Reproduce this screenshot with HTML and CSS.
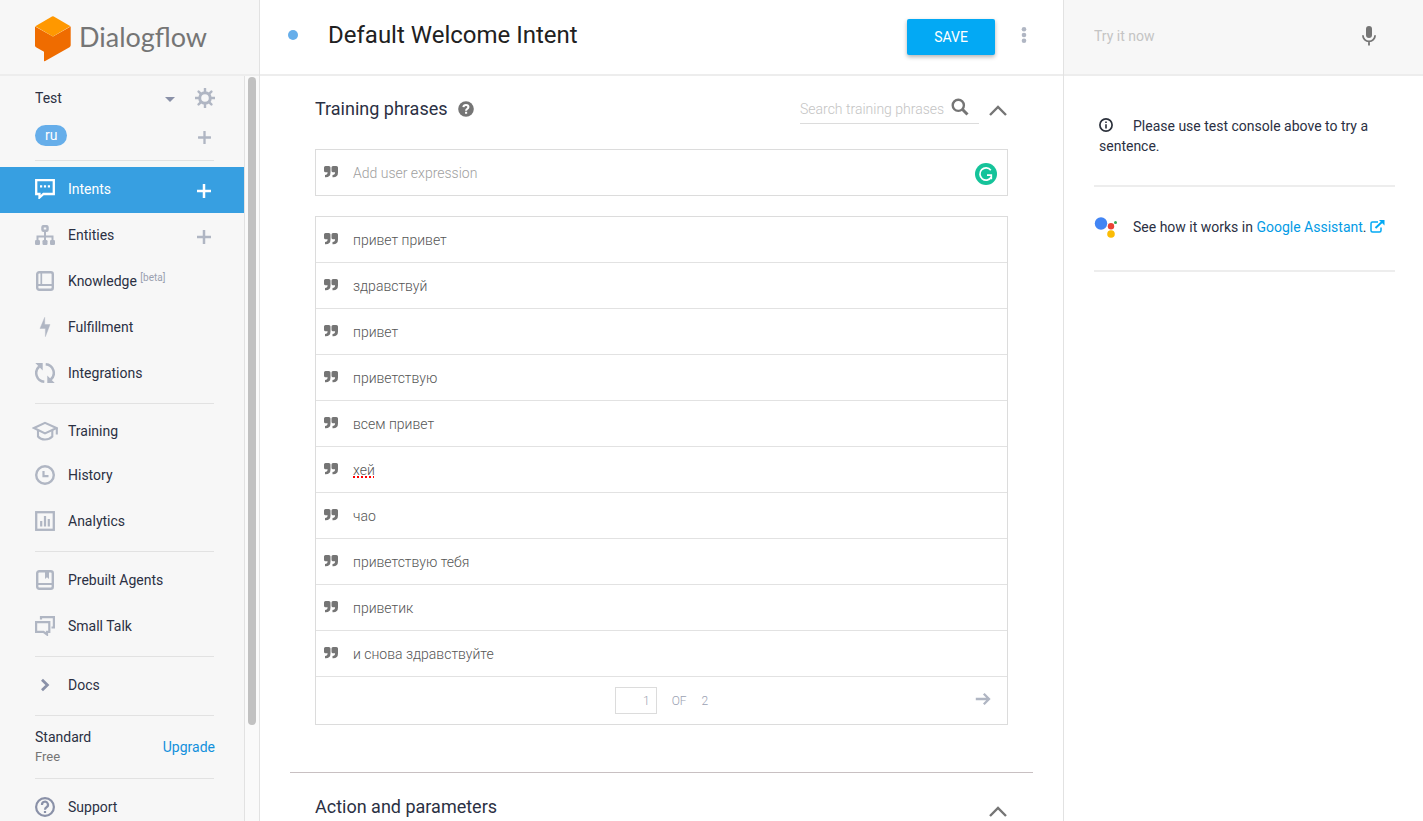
FILE: index.html
```html
<!DOCTYPE html>
<html lang="en">
<head>
<meta charset="utf-8">
<meta name="viewport" content="width=device-width, initial-scale=1">
<title>Dialogflow</title>
<link rel="stylesheet" href="styles.css">
</head>
<body>
<svg class="sprite" aria-hidden="true">
  <symbol id="quote" viewBox="0 0 14 12"><path d="M1.500 0h3.300Q6.500 0 6.500 1.500V6.500Q6.500 11.300 1.700 11.300H1V8.900Q3.600 8.900 3.600 6.300H1.500Q0 6.300 0 4.800V1.500Q0 0 1.500 0ZM9 0h3.300Q14 0 14 1.500V6.500Q14 11.300 9.200 11.300H8.500V8.900Q11.100 8.900 11.100 6.300H9Q7.500 6.300 7.500 4.800V1.500Q7.500 0 9 0Z" fill="#757575"/></symbol>
  <symbol id="plus" viewBox="0 0 14 14"><path d="M7 0.500V13.500M0.500 7H13.500" fill="none" stroke="currentColor" stroke-width="2.500" stroke-linecap="round"/></symbol>
  <symbol id="chevron-up" viewBox="0 0 18 11"><path d="M1 10L9 2L17 10" fill="none" stroke="#757575" stroke-width="2.400"/></symbol>
</svg>
<div class="app">
  <aside class="sidebar">
    <header class="brand">
      <svg class="brand-mark" viewBox="0 0 36 46" aria-hidden="true">
        <path d="M0 10.500V29.500Q0 30.600 1 31.200L9 35.700V44.500Q9 45.700 10.200 45L34.500 31.200Q35.700 30.500 35.700 29.300V10.500L18 20.500Z" fill="#ef6c00"/>
        <path d="M0.300 10.300L17 0.500Q17.900 0 18.800 0.500L35.500 10.300L17.900 20.500Z" fill="#ff9800"/>
      </svg>
      <span class="brand-name">Dialogflow</span>
    </header>
    <div class="sidebar-body">
      <nav class="nav">
        <div class="agent">
          <div class="agent-row">
            <select class="agent-select" aria-label="Agent"><option>Test</option></select>
            <svg class="caret" viewBox="0 0 10 5" aria-hidden="true"><path d="M0 0H10L5 5Z" fill="#8a91a8"/></svg>
            <button class="icon-button" aria-label="Agent settings">
              <svg width="20" height="20" viewBox="0 0 20 20"><g stroke="#b0b6c3" fill="none"><circle cx="10" cy="10" r="5.300" stroke-width="3"/><path d="M10 0.500V4M10 16V19.500M0.500 10H4M16 10H19.500M3.600 3.600L5.700 5.700M14.300 14.300L16.400 16.400M3.600 16.400L5.700 14.300M14.300 5.700L16.400 3.600" stroke-width="2.400" stroke-linecap="round"/></g></svg>
            </button>
          </div>
          <div class="agent-row">
            <span class="lang">ru</span>
            <button class="icon-button lang-add" aria-label="Add language"><svg width="13" height="13"><use href="#plus"/></svg></button>
          </div>
        </div>
        <hr class="rule">
        <div class="item active">
          <a class="link" href="#intents"><svg width="20" height="20" viewBox="0 0 20 20"><path d="M1.200 1.200H18.800V15H8.500L4.500 18.500V15H1.200Z" fill="none" stroke="#fff" stroke-width="2.300"/><path d="M5 6.300h2.200v2.200h-2.200ZM8.900 6.300h2.200v2.200h-2.200ZM12.800 6.300h2.200v2.200h-2.200Z" fill="#fff"/></svg>Intents</a>
          <button class="icon-button" aria-label="Create intent"><svg width="14" height="14"><use href="#plus"/></svg></button>
        </div>
        <div class="item">
          <a class="link" href="#entities"><svg width="20" height="20" viewBox="0 0 20 20" fill="none" stroke="#b0b6c3" stroke-width="2.500"><rect x="7.500" y="1.200" width="5" height="4.600" rx="1"/><path d="M10 6V15M2.500 16V11.500H17.500V16" stroke-width="2"/><g fill="#b0b6c3" stroke="none"><rect x="0" y="15" width="5" height="5" rx="1.200"/><rect x="7.500" y="15" width="5" height="5" rx="1.200"/><rect x="15" y="15" width="5" height="5" rx="1.200"/></g></svg>Entities</a>
          <button class="icon-button" aria-label="Create entity"><svg width="14" height="14"><use href="#plus"/></svg></button>
        </div>
        <div class="item"><a class="link" href="#knowledge"><svg width="20" height="20" viewBox="0 0 20 20" fill="none" stroke="#b0b6c3" stroke-width="2.400"><rect x="2.200" y="1.200" width="15.600" height="17.600" rx="2"/><path d="M2 14H18" stroke-width="2"/><path d="M6.300 1V14" stroke-width="1.700"/></svg><span>Knowledge <span class="beta">[beta]</span></span></a></div>
        <div class="item"><a class="link" href="#fulfillment"><svg width="20" height="20" viewBox="0 0 20 20"><path d="M9.700 0.300V7.500H15L10.400 19.700V11.500H5Z" fill="#b0b6c3" stroke="#b0b6c3" stroke-width="0.400"/></svg>Fulfillment</a></div>
        <div class="item"><a class="link" href="#integrations"><svg width="20" height="20" viewBox="0 0 20 20"><path d="M4.200 3.500A8.700 8.700 0 0 0 9.300 18.700M15.800 16.500A8.700 8.700 0 0 0 10.700 1.300" fill="none" stroke="#b0b6c3" stroke-width="2.500"/><path d="M0.300 0H7.700V7.500ZM19.700 20H12.300V12.500Z" fill="#b0b6c3"/></svg>Integrations</a></div>
        <hr class="rule">
        <div class="item item-training"><a class="link" href="#training"><svg width="26" height="20" viewBox="0 0 26 20" fill="none" stroke="#b0b6c3" stroke-width="2.100"><path d="M2 7L13 1.800L24.500 7L13 12.400Z"/><path d="M6 9V15.500Q8.500 18.500 13 18.500T20.300 15.500V9M24.800 7V13.500"/></svg>Training</a></div>
        <div class="item"><a class="link" href="#history"><svg width="20" height="20" viewBox="0 0 20 20" fill="none" stroke="#b0b6c3" stroke-width="2.400"><circle cx="10" cy="10" r="8.800"/><path d="M8.500 6V11.200H13.500" stroke-width="2.200"/></svg>History</a></div>
        <div class="item"><a class="link" href="#analytics"><svg width="20" height="20" viewBox="0 0 20 20" fill="none" stroke="#b0b6c3" stroke-width="2.300"><rect x="1.200" y="1.200" width="17.600" height="17.600"/><path d="M6.200 10V15.500M10 5V15.500M13.800 8V15.500" stroke-width="2.200"/></svg>Analytics</a></div>
        <hr class="rule">
        <div class="item"><a class="link" href="#prebuilt"><svg width="20" height="20" viewBox="0 0 20 20" fill="none" stroke="#b0b6c3" stroke-width="2.400"><rect x="2.200" y="1.200" width="15.600" height="17.600" rx="2"/><path d="M2 14H18" stroke-width="2"/><path d="M10 1H14V9L12 7.200L10 9Z" fill="#b0b6c3" stroke="none"/></svg>Prebuilt Agents</a></div>
        <div class="item"><a class="link" href="#smalltalk"><svg width="20" height="20" viewBox="0 0 20 20" fill="none" stroke="#b0b6c3" stroke-width="2.200"><path d="M1.100 6.200H14.300V15.800H12V18.500L8.500 15.800H1.100ZM6 3.500V1.200H18.900V11.500H16.500"/></svg>Small Talk</a></div>
        <hr class="rule">
        <div class="item"><a class="link" href="#docs"><svg width="20" height="20" viewBox="0 0 20 20"><path d="M7 4.700L12.400 10L7 15.300" fill="none" stroke="#8a91a8" stroke-width="2.800"/></svg>Docs</a></div>
        <hr class="rule">
        <div class="plan">
          <div><div class="plan-name">Standard</div><div class="plan-tier">Free</div></div>
          <a class="upgrade" href="#upgrade">Upgrade</a>
        </div>
        <hr class="rule">
        <div class="item"><a class="link" href="#support"><svg width="20" height="20" viewBox="0 0 20 20" fill="none" stroke="#8a91a8" stroke-width="2.200"><circle cx="10" cy="10" r="8.900"/><path d="M7 8A3 3 0 1 1 11.500 10.300Q10 11.200 10 12.700M10 14V16"/></svg>Support</a></div>
      </nav>
      <div class="scroll-track"><div class="scroll-thumb"></div></div>
    </div>
  </aside>

  <main class="main">
    <header class="intent-bar">
      <span class="status-dot"></span>
      <h1 class="intent-title">Default Welcome Intent</h1>
      <button class="save">SAVE</button>
      <button class="icon-button" aria-label="More options"><svg width="6" height="16" viewBox="0 0 6 16" fill="#b0b6c3"><circle cx="3" cy="2.300" r="2.300"/><circle cx="3" cy="8" r="2.300"/><circle cx="3" cy="13.700" r="2.300"/></svg></button>
    </header>
    <section class="section">
      <div class="section-head">
        <h2 class="section-title">Training phrases</h2>
        <svg class="help" width="16" height="16" viewBox="0 0 16 16"><circle cx="8" cy="8" r="7.800" fill="#757575"/><path d="M5.400 6.200Q5.600 4 8 4T10.400 6Q10.400 7.200 9.200 7.900Q8.100 8.500 8.100 9.700M8.100 10.800V12.800" fill="none" stroke="#fff" stroke-width="2.100"/></svg>
        <label class="search">
          <input class="search-input" type="text" placeholder="Search training phrases" aria-label="Search training phrases">
          <svg width="18" height="18" viewBox="0 0 18 18" fill="none" stroke="#757575"><circle cx="7.300" cy="7.300" r="5.600" stroke-width="2.400"/><path d="M11.300 11.300L16.500 16.500" stroke-width="3"/></svg>
        </label>
        <button class="icon-button" aria-label="Collapse training phrases"><svg width="18" height="11"><use href="#chevron-up"/></svg></button>
      </div>
      <div class="add">
        <svg class="quote" width="14" height="12"><use href="#quote"/></svg>
        <input class="add-input" type="text" placeholder="Add user expression" aria-label="Add user expression">
        <svg class="badge" width="22" height="22" viewBox="0 0 22 22"><circle cx="11" cy="11" r="11" fill="#15c39a"/><path d="M15.800 7.200A6.100 6.100 0 1 0 16.200 14.300" fill="none" stroke="#fff" stroke-width="1.700"/><path d="M12 12.200H16.300V16.300" fill="none" stroke="#fff" stroke-width="1.700"/></svg>
      </div>
      <div class="phrases">
        <ul class="phrase-list">
          <li class="phrase"><svg class="quote" width="14" height="12"><use href="#quote"/></svg><span>привет привет</span></li>
          <li class="phrase"><svg class="quote" width="14" height="12"><use href="#quote"/></svg><span>здравствуй</span></li>
          <li class="phrase"><svg class="quote" width="14" height="12"><use href="#quote"/></svg><span>привет</span></li>
          <li class="phrase"><svg class="quote" width="14" height="12"><use href="#quote"/></svg><span>приветствую</span></li>
          <li class="phrase"><svg class="quote" width="14" height="12"><use href="#quote"/></svg><span>всем привет</span></li>
          <li class="phrase"><svg class="quote" width="14" height="12"><use href="#quote"/></svg><span class="misspelled">хей</span></li>
          <li class="phrase"><svg class="quote" width="14" height="12"><use href="#quote"/></svg><span>чао</span></li>
          <li class="phrase"><svg class="quote" width="14" height="12"><use href="#quote"/></svg><span>приветствую тебя</span></li>
          <li class="phrase"><svg class="quote" width="14" height="12"><use href="#quote"/></svg><span>приветик</span></li>
          <li class="phrase"><svg class="quote" width="14" height="12"><use href="#quote"/></svg><span>и снова здравствуйте</span></li>
        </ul>
        <div class="pager">
          <div class="pager-pages">
            <input class="page-input" type="text" value="1" aria-label="Page">
            <span>OF</span><span>2</span>
          </div>
          <button class="icon-button" aria-label="Next page"><svg width="16" height="12" viewBox="0 0 16 12" fill="none" stroke="#b0b6c3" stroke-width="2.300"><path d="M0.800 6H14M8.800 0.800L14 6L8.800 11.200"/></svg></button>
        </div>
      </div>
    </section>
    <hr class="section-rule">
    <section class="section section-action">
      <div class="section-head">
        <h2 class="section-title">Action and parameters</h2>
        <button class="icon-button" aria-label="Collapse action and parameters"><svg width="18" height="11"><use href="#chevron-up"/></svg></button>
      </div>
    </section>
  </main>

  <aside class="console">
    <header class="console-bar">
      <input class="try-input" type="text" placeholder="Try it now" aria-label="Try it now">
      <button class="icon-button" aria-label="Speak"><svg width="14" height="20" viewBox="0 0 14 20"><rect x="4" y="0" width="6" height="12" rx="3" fill="#757575"/><path d="M0.900 9.300A6.100 6.100 0 0 0 13.100 9.300M7 15.400V19.500" fill="none" stroke="#757575" stroke-width="1.800"/></svg></button>
    </header>
    <div class="console-body">
      <p class="note"><svg class="info" width="14" height="14" viewBox="0 0 14 14"><circle cx="7" cy="7" r="6.100" fill="none" stroke="#2b303b" stroke-width="1.700"/><path d="M6.200 3.500h1.600v1.500h-1.600ZM6.200 6.200h1.600v4.300h-1.600Z" fill="#2b303b"/></svg>Please use test console above to try a sentence.</p>
      <div class="assistant">
        <svg width="24" height="22" viewBox="0 0 24 22"><circle cx="7" cy="7.500" r="6.200" fill="#4285f4"/><circle cx="17" cy="10.200" r="3.200" fill="#ea4335"/><circle cx="21.500" cy="6.600" r="1.500" fill="#34a853"/><circle cx="17" cy="18" r="3.800" fill="#fbbc05"/></svg>
        <span>See how it works in <a class="assistant-link" href="#assistant">Google Assistant</a>. <svg class="external" width="15" height="13" viewBox="0 0 15 13" fill="none" stroke="#03a9f4"><path d="M8 2H2.500Q1 2 1 3.500V10.500Q1 12 2.500 12H9.500Q11 12 11 10.500V7.500" stroke-width="1.500"/><path d="M5.500 8L12.500 1.500" stroke-width="2"/><path d="M9 0H14.500V5.500Z" fill="#03a9f4" stroke="none"/></svg></span>
      </div>
    </div>
  </aside>
</div>
</body>
</html>
```
FILE: styles.css
```css
* { box-sizing: border-box; }
body {
  margin: 0;
  font: 14px/20px Roboto, "Open Sans", sans-serif;
  color: #2b3043;
  background: #fff;
}
a { text-decoration: none; }
svg { display: block; flex: none; }
button, input, select { font: inherit; }
input { min-width: 0; padding: 0; border: 0; background: none; outline: 0; }
.sprite { position: absolute; width: 0; height: 0; }
.app {
  display: grid;
  grid-template-columns: 260px minmax(0, 1fr) 360px;
  height: 100vh;
  overflow: hidden;
}
.icon-button {
  display: flex;
  padding: 0;
  border: 0;
  background: none;
  color: #b0b6c3;
  cursor: pointer;
}

/* Sidebar */
.sidebar {
  display: flex;
  flex-direction: column;
  min-height: 0;
  border-right: 1px solid #e2e2e2;
  background: #f7f7f7;
}
.brand, .intent-bar, .console-bar {
  display: flex;
  flex: none;
  align-items: center;
  height: 76px;
  border-bottom: 2px solid #ededed;
}
.brand { gap: 8px; padding: 4px 0 0 35px; }
.brand-mark { width: 36px; height: 46px; }
.brand-name {
  padding-bottom: 4px;
  font: 27px/36px Lato, sans-serif;
  color: #757575;
}
.sidebar-body { display: flex; flex: 1; min-height: 0; }
.nav {
  flex: 1;
  overflow: hidden;
  border-right: 1px solid #e2e2e2;
}
.scroll-track { width: 14px; padding: 1px 2px 0 3px; background: #fafafa; }
.scroll-thumb { width: 8px; height: 87%; border-radius: 4px; background: #c1c1c1; }
.agent { padding: 12px 29px 14px 35px; }
.agent-row { display: flex; align-items: center; justify-content: space-between; }
.agent-row + .agent-row { margin-top: 17px; }
.agent-select {
  flex: 1;
  height: 20px;
  padding: 0;
  border: 0;
  appearance: none;
  background: none;
  color: inherit;
}
.caret { width: 10px; height: 5px; margin: 2px 20px 0 0; }
.lang {
  padding: 0 10px;
  border-radius: 11px;
  background: #66aeea;
  color: #fff;
  line-height: 21px;
}
.lang-add { margin: 4px 4px 0 0; }
.rule { height: 1px; margin: 6px 30px 6px 35px; border: 0; background: #e2e2e2; }
.agent + .rule { margin-top: 0; }
.item {
  display: flex;
  align-items: center;
  justify-content: space-between;
  height: 46px;
  padding: 0 33px 0 35px;
}
.item .icon-button { padding-top: 1px; }
.link {
  display: flex;
  align-items: center;
  gap: 13px;
  padding-bottom: 2px;
  color: inherit;
}
.active { background: #379fe1; color: #fff; }
.active .icon-button { color: #fff; }
.item-training { height: 43px; padding-left: 32px; }
.item-training .link { gap: 10px; }
.beta { font-size: 10px; line-height: 1; vertical-align: 5px; color: #9aa0b0; }
.plan {
  display: flex;
  align-items: center;
  justify-content: space-between;
  padding: 5px 29px 5px 35px;
}
.plan-tier { font-size: 13px; color: #757575; }
.upgrade { color: #1290dc; }

/* Intent editor */
.main { min-width: 0; }
.intent-bar { padding: 0 36px 0 28px; }
.status-dot {
  width: 10px;
  height: 10px;
  margin-bottom: 4px;
  border-radius: 50%;
  background: #66aeea;
}
.intent-title {
  flex: 1;
  margin: 0 0 4px 30px;
  font-size: 24px;
  font-weight: 400;
  line-height: 32px;
  color: #212121;
}
.save {
  height: 36px;
  margin-right: 26px;
  padding: 0 27px;
  border: 0;
  border-radius: 2px;
  background: #03a9f4;
  box-shadow: 0 2px 4px rgba(0, 0, 0, 0.3);
  color: #fff;
}
.intent-bar .icon-button { margin-bottom: 4px; }
.section { padding: 18px 55px 0; }
.section-action { padding-top: 19px; }
.section-head { display: flex; align-items: center; height: 30px; }
.section-title { margin: 0; font-size: 18px; font-weight: 400; line-height: 24px; }
.help { margin-left: 10px; }
.search {
  display: flex;
  align-items: flex-start;
  width: 179px;
  height: 30px;
  margin-left: auto;
  border-bottom: 1px solid #dcdcdc;
}
.search-input { flex: 1; height: 30px; font-weight: 300; }
.search svg { margin: 4px 10px 0 6px; }
.section-head .icon-button { margin: 2px 1px 0 10px; }
.section-action .icon-button { margin: 8px 1px 0 auto; }
::placeholder { color: #b5b5b5; opacity: 1; }
.search-input::placeholder, .try-input::placeholder { color: #c4c4c4; }
.add {
  display: flex;
  align-items: center;
  height: 47px;
  margin-top: 25px;
  padding: 0 10px 0 8px;
  border: 1px solid #dcdcdc;
}
.quote { margin: 0 15px 2px 0; }
.add-input { flex: 1; height: 45px; font-weight: 300; }
.add-input::placeholder { color: #a0a0a0; }
.badge { margin-top: 2px; }
.phrases { margin-top: 20px; border: 1px solid #dcdcdc; }
.phrase-list { margin: 0; padding: 0; list-style: none; }
.phrase {
  display: flex;
  align-items: center;
  height: 46px;
  padding: 0 8px;
  border-bottom: 1px solid #e2e2e2;
  font-weight: 300;
  color: #555;
}
.misspelled { text-decoration: underline dotted #f00 2px; text-underline-offset: 2px; }
.pager {
  display: grid;
  grid-template-columns: 1fr auto 1fr;
  align-items: center;
  height: 47px;
  padding: 0 16px;
}
.pager-pages {
  display: flex;
  grid-column: 2;
  align-items: center;
  gap: 15px;
  font-size: 12px;
  font-weight: 300;
  color: #9ba2b3;
}
.page-input {
  width: 42px;
  height: 27px;
  padding-right: 6px;
  border: 1px solid #dcdcdc;
  color: inherit;
  text-align: right;
}
.pager .icon-button { justify-self: end; margin-bottom: 4px; }
.section-rule { height: 1px; margin: 47px 30px 0; border: 0; background: #c8c0c2; }

/* Test console */
.console { border-left: 1px solid #e2e2e2; }
.console-bar { padding: 0 47px 3px 30px; background: #f7f7f7; }
.try-input { flex: 1; height: 40px; }
.console-body { padding: 0 28px 0 30px; }
.note { margin: 0; padding: 40px 5px 29px; border-bottom: 2px solid #ededed; }
.info { display: inline-block; margin-right: 20px; vertical-align: -1px; }
.assistant {
  display: flex;
  align-items: center;
  gap: 15px;
  padding: 29px 0 32px;
  border-bottom: 2px solid #ededed;
}
.assistant-link { color: #039be5; }
.external { display: inline-block; vertical-align: -1px; }
```
